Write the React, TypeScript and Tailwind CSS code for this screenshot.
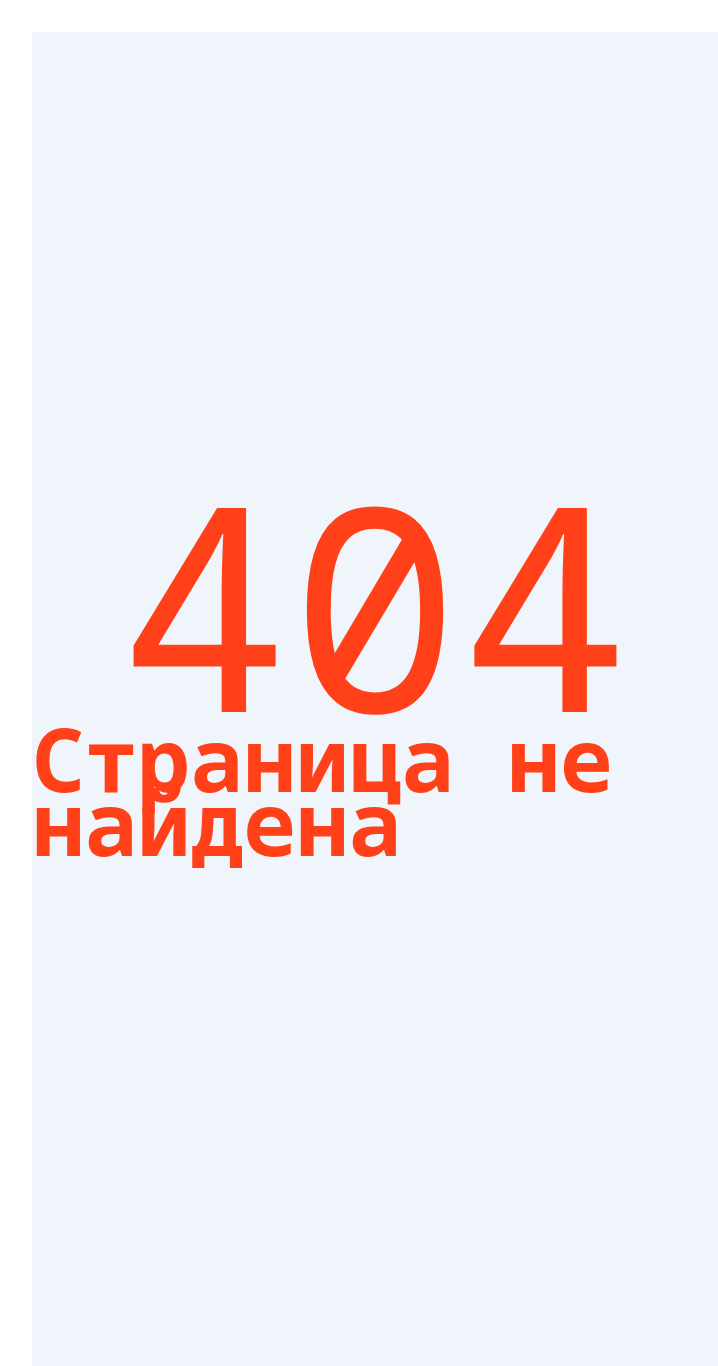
export default function App() {
  return (
    <div className="min-h-screen bg-white pl-8 pt-8">
      <main className="min-h-[1334px] bg-[#f0f4fb] pt-[446px] font-['Noto_Sans_Mono',monospace] text-[#ff4019]">
        <div className="text-center text-[284px] leading-[248px]">404</div>
        <h1 className="text-[88px] font-bold leading-[64px]">Страница не найдена</h1>
      </main>
    </div>
  );
}
